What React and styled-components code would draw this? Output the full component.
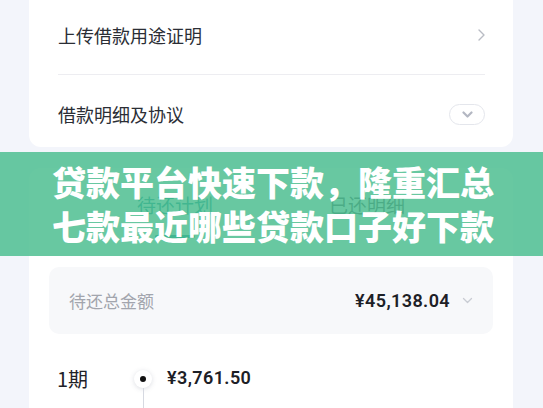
import React from 'react'
import styled, { createGlobalStyle } from 'styled-components'

const GlobalStyle = createGlobalStyle`
  body {
    margin: 0;
    background: #f3f5fb;
    font-family: "Noto Sans CJK SC", "Noto Sans", sans-serif;
  }
`

const Page = styled.div`
  position: relative;
  height: 408px;
  overflow: hidden;
  padding: 0 30px 0 29px;
`

const TopCard = styled.div`
  background: #fff;
  border-radius: 0 0 12px 12px;
  padding: 0 28px 0 29px;
`

const Row = styled.div`
  display: flex;
  align-items: center;
  justify-content: space-between;
  height: ${p => p.$h}px;
  padding: ${p => p.$pad};
  box-sizing: border-box;
  font-size: 18px;
  color: #2b2e35;
`

const Divider = styled.div`
  height: 1px;
  background: #ededf1;
`

const Pill = styled.div`
  width: 36px;
  height: 21px;
  box-sizing: border-box;
  border: 1px solid #e4e6ec;
  border-radius: 11px;
  display: flex;
  align-items: center;
  justify-content: center;
`

const PlanCard = styled.div`
  margin-top: 21px;
  background: #fff;
  border-radius: 12px 12px 0 0;
  padding: 0 20px;
  height: 260px;
`

const TabBar = styled.div`
  display: flex;
  justify-content: center;
  padding-top: 24px;
`

const Tab = styled.div`
  width: 192px;
  display: flex;
  flex-direction: column;
  align-items: center;
  font-size: 19px;
  line-height: 26px;
  color: ${p => (p.$active ? '#0f8f95' : '#4f535b')};
`

const Indicator = styled.div`
  width: 40px;
  height: 3px;
  border-radius: 2px;
  margin-top: 17px;
  background: ${p => (p.$show ? '#0f8f95' : 'transparent')};
`

const SummaryBox = styled.div`
  margin-top: 29px;
  height: 67px;
  border-radius: 10px;
  background: #f7f8fa;
  display: flex;
  align-items: center;
  padding: 0 20px;
`

const SummaryLabel = styled.div`
  flex: 1;
  font-size: 17px;
  color: #a2a5ad;
`

const Money = styled.div`
  font-family: Roboto, "Noto Sans", sans-serif;
  font-weight: 600;
  font-size: 18px;
  color: #1d2026;
  letter-spacing: 0.4px;
`

const PeriodGrid = styled.div`
  margin-top: 33px;
  padding-left: 8px;
  display: grid;
  grid-template-columns: 62px 20px 1fr;
  grid-template-rows: 24px auto;
  column-gap: 14px;
  row-gap: 14px;
`

const PeriodLabel = styled.div`
  font-size: 20px;
  line-height: 24px;
  color: #1f2228;
`

const Timeline = styled.div`
  grid-row: 1 / span 2;
  grid-column: 2;
  display: flex;
  flex-direction: column;
  align-items: center;
  padding-top: 3px;
`

const Dot = styled.div`
  width: 18px;
  height: 18px;
  border-radius: 50%;
  background: #fff;
  box-shadow: 0 1px 5px rgba(60, 70, 100, 0.18);
  display: flex;
  align-items: center;
  justify-content: center;
  &::after {
    content: '';
    width: 6px;
    height: 6px;
    border-radius: 50%;
    background: #111;
  }
`

const Line = styled.div`
  width: 1px;
  flex: 1;
  min-height: 40px;
  background: #d6d9e1;
`

const SubText = styled.div`
  font-size: 14px;
  color: #a2a5ad;
  display: flex;
  gap: 60px;
`

const Banner = styled.div`
  position: absolute;
  top: 152px;
  left: 0;
  right: 0;
  height: 104px;
  background: rgba(75, 189, 143, 0.84);
  display: flex;
  flex-direction: column;
  align-items: center;
  justify-content: center;
  color: #fff;
  font-size: 34px;
  font-weight: 900;
  line-height: 44px;
  padding-left: 3px;
`

const Chevron = ({ dir }) =>
  dir === 'right' ? (
    <svg width="7" height="12" viewBox="0 0 7 12">
      <path d="M1 1l5 5-5 5" fill="none" stroke="#b9bcc4" strokeWidth="1.4" strokeLinecap="round" strokeLinejoin="round" />
    </svg>
  ) : (
    <svg width="11" height="7" viewBox="0 0 11 7">
      <path d="M1.5 1.5l4 4 4-4" fill="none" stroke={dir === 'thin' ? '#c9ccd3' : '#b3b7c2'} strokeWidth={dir === 'thin' ? 1.3 : 2.2} strokeLinecap="round" strokeLinejoin="round" />
    </svg>
  )

export default function App() {
  return (
    <Page>
      <GlobalStyle />
      <TopCard>
        <Row $h={74} $pad="0 0 4px">
          <span>上传借款用途证明</span>
          <Chevron dir="right" />
        </Row>
        <Divider />
        <Row $h={72} $pad="6px 0 0">
          <span>借款明细及协议</span>
          <Pill>
            <Chevron dir="down" />
          </Pill>
        </Row>
      </TopCard>

      <PlanCard>
        <TabBar>
          <Tab $active>
            待还计划
            <Indicator $show />
          </Tab>
          <Tab>
            已还明细
            <Indicator />
          </Tab>
        </TabBar>

        <SummaryBox>
          <SummaryLabel>待还总金额</SummaryLabel>
          <Money>¥45,138.04</Money>
          <span style={{ marginLeft: 12, display: 'flex' }}>
            <Chevron dir="thin" />
          </span>
        </SummaryBox>

        <PeriodGrid>
          <PeriodLabel>1期</PeriodLabel>
          <Timeline>
            <Dot />
            <Line />
          </Timeline>
          <Money>¥3,761.50</Money>
          <SubText>2023/04/08</SubText>
          <SubText>
            <span>本金 ¥3,500.00</span>
            <span>利息 ¥261.50</span>
          </SubText>
        </PeriodGrid>
      </PlanCard>

      <Banner>
        <div>贷款平台快速下款，隆重汇总</div>
        <div>七款最近哪些贷款口子好下款</div>
      </Banner>
    </Page>
  )
}
